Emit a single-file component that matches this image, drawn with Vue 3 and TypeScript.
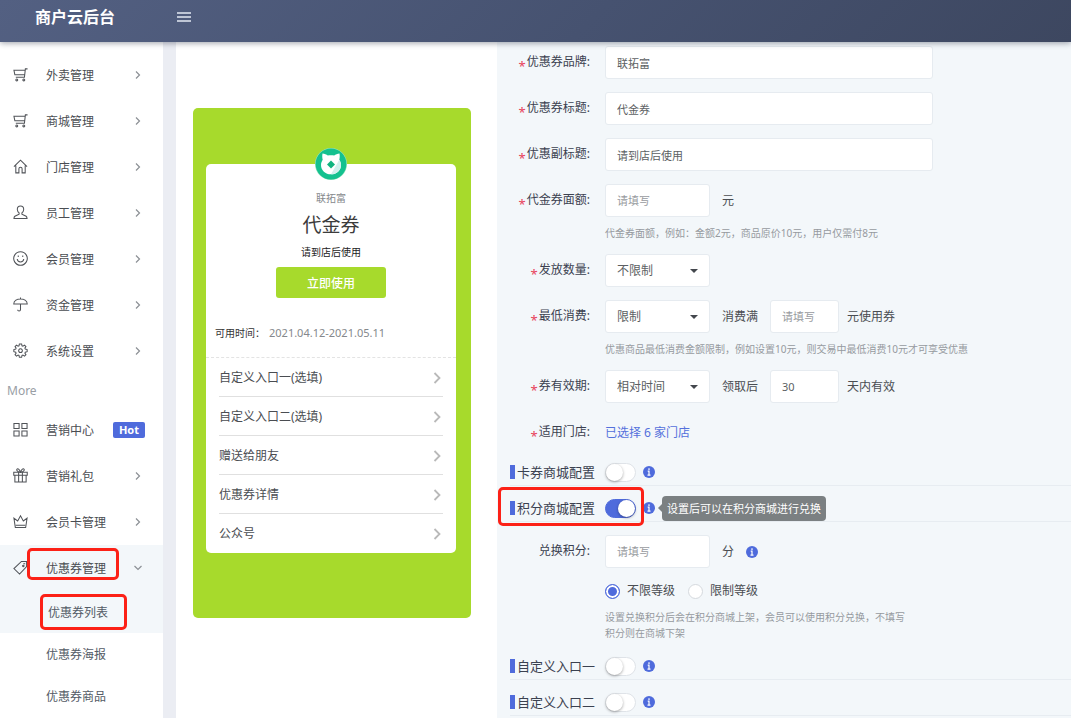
<script setup lang="ts">
import { ref } from 'vue'

interface MenuItem {
  label: string
  icon: string
  badge?: string
  open?: boolean
}

const mainMenu: MenuItem[] = [
  { label: '外卖管理', icon: 'cart' },
  { label: '商城管理', icon: 'cart' },
  { label: '门店管理', icon: 'home' },
  { label: '员工管理', icon: 'user' },
  { label: '会员管理', icon: 'smile' },
  { label: '资金管理', icon: 'umbrella' },
  { label: '系统设置', icon: 'gear' },
]

const moreMenu: MenuItem[] = [
  { label: '营销中心', icon: 'grid', badge: 'Hot' },
  { label: '营销礼包', icon: 'gift' },
  { label: '会员卡管理', icon: 'crown' },
  { label: '优惠券管理', icon: 'tag', open: true },
]

const subMenu = ['优惠券列表', '优惠券海报', '优惠券商品']

const icons: Record<string, string> = {
  cart: 'M15.500 2h-2.300l-1 9H3M13 3.500H1l1 4.800h10.500M4 12.800a1 1 0 1 0 .01 0M11.500 12.800a1 1 0 1 0 .01 0',
  home: 'M1 8.200 8 1.200l7 7M3 6.800v8h3.300v-4.300a1.700 1.700 0 0 1 3.400 0v4.300H13v-8',
  user: 'M8 1C5.800 1 4.500 2.600 4.600 4.700c.1 1.700.9 2.800 1.900 3.600v1.500L2 12c-.6.4-.9 1-1 2.500h14c-.1-1.500-.4-2.100-1-2.500L9.500 9.800V8.300c1-.8 1.800-1.900 1.900-3.600C11.500 2.600 10.200 1 8 1z',
  smile: 'M8 .8a7.200 7.200 0 1 0 .01 0M4.500 8.500c.5 4.200 6.500 4.200 7 0M5.600 4.800v1.700M10.400 4.800v1.700',
  umbrella: 'M.8 7.500C1 .2 15 .2 15.200 7.500zM8 7.500v5.800c0 2-3 2-3 .2M8 2V.6',
  gear: 'M6.800 1h2.400l.4 2 1 .4 1.700-1.100 1.500 1.500-1.100 1.700.4 1 2 .5v2.300l-2 .5-.4 1 1.100 1.700-1.500 1.500-1.700-1.100-1 .4-.4 1.900H6.800l-.4-1.900-1-.4-1.700 1.100-1.500-1.500 1.100-1.700-.4-1-2-.5V7l2-.5.4-1-1.100-1.700 1.500-1.500 1.700 1.100 1-.4zM8 6.200a2 2 0 1 0 .01 0',
  grid: 'M1 1.500h5.500v5.500H1zM9.500 1.500H15v5.500H9.500zM1 9.500h5.500V15H1zM9.500 9.500H15V15H9.500z',
  gift: 'M.8 4.500h14.400v3.200H.8zM2 7.700h12V15H2zM6 4.500V15M10 4.500V15M8 4.500C7 1.500 5.500.5 4.500 1S3.500 3.500 8 4.500zM8 4.500C9 1.500 10.500.5 11.500 1S12.500 3.500 8 4.500z',
  crown: 'M2.500 14.500 1 4.500l4 3L8 2l3 5.500 4-3-1.500 10zM3 12h10',
  tag: 'M9 1.500h5.500V7L7 15 1 9.200zM11 4h2M11 5.500a.8.8 0 1 0 .01 0',
}

const entries = ['自定义入口一(选填)', '自定义入口二(选填)', '赠送给朋友', '优惠券详情', '公众号']

const brand = ref('联拓富')
const title = ref('代金券')
const subtitle = ref('请到店后使用')
const amount = ref('')
const quantity = ref('不限制')
const minimum = ref('限制')
const minimumAmount = ref('')
const validity = ref('相对时间')
const validDays = ref('30')
const cardMall = ref(false)
const pointsMall = ref(true)
const points = ref('')
const level = ref('all')
const entryOne = ref(false)
const entryTwo = ref(false)
</script>

<template>
  <div class="app">
    <header class="topbar">
      <h1 class="brand">商户云后台</h1>
      <button class="burger" type="button" aria-label="菜单">
        <svg width="14" height="10" viewBox="0 0 14 10"><path d="M0 1h14M0 5h14M0 9h14" stroke="#e4e9f2" stroke-width="1.400" /></svg>
      </button>
    </header>

    <div class="body">
      <nav class="sidebar">
        <ul>
          <li v-for="item in mainMenu" :key="item.label">
            <a class="item" href="#">
              <svg class="icon" viewBox="0 0 16 16"><path :d="icons[item.icon]" /></svg>
              <span class="name">{{ item.label }}</span>
              <svg class="chev" viewBox="0 0 14 14"><path d="M5 3.500 8.500 7 5 10.500" /></svg>
            </a>
          </li>
        </ul>
        <p class="more">More</p>
        <ul>
          <li v-for="item in moreMenu" :key="item.label" :class="{ open: item.open }">
            <a class="item" href="#">
              <svg class="icon" viewBox="0 0 16 16"><path :d="icons[item.icon]" /></svg>
              <span class="name">{{ item.label }}</span>
              <span v-if="item.badge" class="badge">{{ item.badge }}</span>
              <svg v-else-if="item.open" class="chev" viewBox="0 0 14 14"><path d="M3.500 5 7 8.500 10.500 5" /></svg>
              <svg v-else class="chev" viewBox="0 0 14 14"><path d="M5 3.500 8.500 7 5 10.500" /></svg>
            </a>
            <span v-if="item.open" class="mark mark-menu"></span>
          </li>
        </ul>
        <ul>
          <li v-for="(name, i) in subMenu" :key="name" :class="{ open: i === 0 }">
            <a class="sub" :class="{ current: i === 0 }" href="#">{{ name }}</a>
            <span v-if="i === 0" class="mark mark-sub"></span>
          </li>
        </ul>
      </nav>

      <main class="main">
        <section class="preview">
          <div class="phone">
            <div class="coupon">
              <svg class="logo" viewBox="0 0 32 32">
                <circle cx="16" cy="16" r="16" fill="#9be3c0" />
                <circle cx="16" cy="16" r="15.400" fill="#14c18f" />
                <path d="M7.500 5.500c2 .1 4 1 5.300 2.100 2-.6 4.400-.6 6.400 0 1.300-1.100 3.300-2 5.300-2.100.4 2.200.3 4.300-.2 6.200 1 1.500 1.700 3.200 1.700 5.200 0 5.400-4.400 9.400-10 9.400s-10-4-10-9.400c0-2 .7-3.700 1.700-5.200-.5-1.900-.6-4-.2-6.200z" fill="#fff" />
                <path d="M24.300 11.700c1 1.500 1.700 3.200 1.700 5.200 0 5.400-4.400 9.400-10 9.400z" fill="#d3f0ee" />
                <path d="M16 12.500 20 16.500 16 20.500 12 16.500z" fill="#10b47f" />
              </svg>
              <p class="c-brand">{{ brand }}</p>
              <h2 class="c-title">{{ title }}</h2>
              <p class="c-sub">{{ subtitle }}</p>
              <button class="c-use" type="button">立即使用</button>
              <p class="c-time"><span>可用时间：</span><span class="date">2021.04.12-2021.05.11</span></p>
              <ul class="c-list">
                <li v-for="entry in entries" :key="entry">
                  <a href="#">
                    <span>{{ entry }}</span>
                    <svg width="12" height="12" viewBox="0 0 12 12"><path d="M3.500 1 8.500 6l-5 5" fill="none" stroke="#b9b9b9" stroke-width="1.800" /></svg>
                  </a>
                </li>
              </ul>
            </div>
          </div>
        </section>

        <form class="form" @submit.prevent>
          <div class="field">
            <label for="brand"><i>*</i>优惠券品牌:</label>
            <input id="brand" v-model="brand" class="box wide" type="text" />
          </div>
          <div class="field">
            <label for="title"><i>*</i>优惠券标题:</label>
            <input id="title" v-model="title" class="box wide" type="text" />
          </div>
          <div class="field">
            <label for="subtitle"><i>*</i>优惠副标题:</label>
            <input id="subtitle" v-model="subtitle" class="box wide" type="text" />
          </div>
          <div class="field">
            <label for="amount"><i>*</i>代金券面额:</label>
            <div>
              <div class="line">
                <input id="amount" v-model="amount" class="box mid" type="text" placeholder="请填写" />
                <span class="unit">元</span>
              </div>
              <p class="hint">代金券面额，例如：金额2元，商品原价10元，用户仅需付8元</p>
            </div>
          </div>
          <div class="field">
            <label for="quantity"><i>*</i>发放数量:</label>
            <div class="line">
              <span class="pick">
                <select id="quantity" v-model="quantity" class="box mid"><option>不限制</option><option>限制</option></select>
                <svg viewBox="0 0 8 4"><path d="M0 0h8L4 4z" /></svg>
              </span>
            </div>
          </div>
          <div class="field">
            <label for="minimum"><i>*</i>最低消费:</label>
            <div>
              <div class="line">
                <span class="pick">
                  <select id="minimum" v-model="minimum" class="box mid"><option>限制</option><option>不限制</option></select>
                  <svg viewBox="0 0 8 4"><path d="M0 0h8L4 4z" /></svg>
                </span>
                <label class="unit" for="minimum-amount">消费满</label>
                <input id="minimum-amount" v-model="minimumAmount" class="box small" type="text" placeholder="请填写" />
                <span class="unit tail">元使用券</span>
              </div>
              <p class="hint">优惠商品最低消费金额限制，例如设置10元，则交易中最低消费10元才可享受优惠</p>
            </div>
          </div>
          <div class="field">
            <label for="validity"><i>*</i>券有效期:</label>
            <div class="line">
              <span class="pick">
                <select id="validity" v-model="validity" class="box mid"><option>相对时间</option><option>固定时间</option></select>
                <svg viewBox="0 0 8 4"><path d="M0 0h8L4 4z" /></svg>
              </span>
              <label class="unit" for="days">领取后</label>
              <input id="days" v-model="validDays" class="box small" type="text" />
              <span class="unit tail">天内有效</span>
            </div>
          </div>
          <div class="field">
            <span class="label"><i>*</i>适用门店:</span>
            <a class="stores" href="#">已选择 6 家门店</a>
          </div>

          <div class="section">
            <label for="card-mall">卡券商城配置</label>
            <input id="card-mall" v-model="cardMall" class="switch" type="checkbox" />
            <svg class="info" viewBox="0 0 12 12"><circle cx="6" cy="6" r="6" /><path d="M6 2.200v1.700M4.700 5.200H6v4M4.500 9.200h3" /></svg>
          </div>
          <div class="section">
            <label for="points-mall">积分商城配置</label>
            <input id="points-mall" v-model="pointsMall" class="switch" type="checkbox" />
            <span class="tip-anchor">
              <svg class="info" viewBox="0 0 12 12"><circle cx="6" cy="6" r="6" /><path d="M6 2.200v1.700M4.700 5.200H6v4M4.500 9.200h3" /></svg>
              <span class="tip" role="tooltip">设置后可以在积分商城进行兑换</span>
            </span>
            <span class="mark mark-section"></span>
          </div>

          <div class="field after">
            <label for="points">兑换积分:</label>
            <div>
              <div class="line">
                <input id="points" v-model="points" class="box mid" type="text" placeholder="请填写" />
                <span class="unit">分</span>
                <svg class="info" viewBox="0 0 12 12"><circle cx="6" cy="6" r="6" /><path d="M6 2.200v1.700M4.700 5.200H6v4M4.500 9.200h3" /></svg>
              </div>
              <div class="radios">
                <label><input v-model="level" type="radio" name="level" value="all" />不限等级</label>
                <label><input v-model="level" type="radio" name="level" value="limited" />限制等级</label>
              </div>
              <p class="hint narrow">设置兑换积分后会在积分商城上架，会员可以使用积分兑换，不填写积分则在商城下架</p>
            </div>
          </div>

          <div class="section">
            <label for="entry-one">自定义入口一</label>
            <input id="entry-one" v-model="entryOne" class="switch" type="checkbox" />
            <svg class="info" viewBox="0 0 12 12"><circle cx="6" cy="6" r="6" /><path d="M6 2.200v1.700M4.700 5.200H6v4M4.500 9.200h3" /></svg>
          </div>
          <div class="section">
            <label for="entry-two">自定义入口二</label>
            <input id="entry-two" v-model="entryTwo" class="switch" type="checkbox" />
            <svg class="info" viewBox="0 0 12 12"><circle cx="6" cy="6" r="6" /><path d="M6 2.200v1.700M4.700 5.200H6v4M4.500 9.200h3" /></svg>
          </div>
        </form>
      </main>
    </div>
  </div>
</template>

<style>
body {
  margin: 0;
  background: #fff;
}
</style>

<style scoped>
.app,
.app * {
  box-sizing: border-box;
}
.app {
  display: flex;
  flex-direction: column;
  min-height: 100vh;
  font-family: "Noto Sans", "Noto Sans CJK SC", sans-serif;
  font-size: 12px;
  line-height: 16px;
  color: #4a4d52;
}
.app input,
.app select,
.app button {
  font-family: inherit;
}
ul,
p,
h1,
h2 {
  margin: 0;
  padding: 0;
  list-style: none;
}
a {
  color: inherit;
  text-decoration: none;
}

.topbar {
  position: relative;
  z-index: 3;
  display: flex;
  align-items: center;
  gap: 62px;
  height: 42px;
  padding: 0 35px 9px;
  background: linear-gradient(135deg, #536082 0%, #465270 55%, #3d4760 100%);
  box-shadow: 0 1px 6px rgba(30, 40, 60, 0.45);
}
.brand {
  font-size: 16px;
  line-height: 24px;
  font-weight: 700;
  color: #fff;
}
.burger {
  display: flex;
  padding: 0;
  border: 0;
  background: none;
}

.body {
  display: flex;
  flex: 1;
  background: #ebedf3;
}
.sidebar {
  flex: 0 0 163px;
  padding-top: 10px;
  background: #fff;
}
.sidebar li {
  position: relative;
}
.open {
  background: #f3f7fa;
}
.item {
  display: flex;
  align-items: center;
  gap: 18px;
  height: 46px;
  padding: 0 18px 1px 13px;
}
.icon {
  flex: none;
  width: 15px;
  height: 15px;
  fill: none;
  stroke: #505358;
  stroke-width: 1.1;
}
.name {
  flex: 1;
  padding-top: 3px;
  white-space: nowrap;
}
.chev {
  width: 14px;
  height: 14px;
  fill: none;
  stroke: #8c9095;
  stroke-width: 1.2;
}
.badge {
  padding: 0 6px;
  border-radius: 2px;
  background: #4f6bdc;
  color: #fff;
  font-size: 11px;
  font-weight: 700;
}
.more {
  padding-left: 7px;
  line-height: 33px;
  color: #999ea5;
}
.sub {
  display: block;
  padding: 1px 0 0 46px;
  line-height: 41px;
  color: #545b66;
}
.sub.current {
  padding-left: 48px;
}

.mark {
  position: absolute;
  z-index: 2;
  border: 3px solid #fc2117;
  border-radius: 5px;
  pointer-events: none;
}
.mark-menu {
  left: 27px;
  top: 3px;
  width: 92px;
  height: 32px;
}
.mark-sub {
  left: 40px;
  top: 3px;
  width: 87px;
  height: 36px;
}
.mark-section {
  left: -12px;
  top: 1px;
  width: 146px;
  height: 39px;
}

.main {
  display: flex;
  flex: 1;
  margin-left: 13px;
}
.preview {
  flex: 0 0 321px;
  padding: 66px 26px 0 17px;
  background: #fff;
}
.phone {
  padding: 56px 15px 65px 13px;
  border-radius: 5px;
  background: #a7da2c;
}
.coupon {
  position: relative;
  display: flex;
  flex-direction: column;
  align-items: center;
  padding-top: 26px;
  border-radius: 5px;
  background: #fff;
}
.logo {
  position: absolute;
  top: -16px;
  width: 32px;
  height: 32px;
}
.c-brand {
  font-size: 10px;
  color: #85888c;
}
.c-title {
  font-size: 19px;
  line-height: 38px;
  font-weight: 400;
  color: #3c3c3c;
}
.c-sub {
  font-size: 10px;
  color: #222;
}
.c-use {
  width: 110px;
  height: 31px;
  margin-top: 7px;
  border: 0;
  border-radius: 3px;
  background: #a7da2c;
  color: #fff;
  font-size: 12px;
  font-weight: 500;
}
.c-time {
  display: flex;
  align-self: stretch;
  gap: 4px;
  margin-top: 11px;
  padding-left: 9px;
  font-size: 10px;
  line-height: 48px;
  color: #333;
}
.date {
  font-size: 11px;
  color: #85888c;
}
.c-list {
  align-self: stretch;
  padding: 0 13px 1px;
  border-top: 1px dashed #e3e3e3;
}
.c-list li + li {
  border-top: 1px solid #e0e0e0;
}
.c-list a {
  display: flex;
  align-items: center;
  justify-content: space-between;
  height: 38px;
  padding-top: 2px;
}

.form {
  flex: 1;
  padding: 4px 0 0 13px;
  background: #f3f7fa;
}
.field {
  display: grid;
  grid-template-columns: 80px 1fr;
  column-gap: 15px;
}
.field + .field,
.after {
  margin-top: 13px;
}
.after {
  margin-bottom: 3px;
}
.field > label,
.label {
  display: flex;
  justify-content: flex-end;
  font-size: 12px;
  line-height: 32px;
  white-space: nowrap;
  color: #3b4150;
}
.field i {
  padding: 4px 1px 0 0;
  font-size: 13px;
  line-height: 32px;
  height: 32px;
  font-style: normal;
  color: #e8415a;
}
.line {
  display: flex;
  align-items: center;
}
.box {
  height: 33px;
  padding: 0 11px;
  border: 1px solid #e6ebf0;
  border-radius: 3px;
  background: #fff;
  color: #5c5f63;
  font-size: 11px;
  outline: none;
}
.box::placeholder {
  color: #989ba0;
  opacity: 1;
}
.wide {
  width: 100%;
  max-width: 328px;
}
.mid {
  width: 105px;
}
.small {
  width: 69px;
}
.pick {
  position: relative;
  display: flex;
}
.pick select {
  appearance: none;
  font-size: 12px;
}
.pick svg {
  position: absolute;
  right: 12px;
  top: 15px;
  width: 8px;
  height: 4px;
  fill: #43474d;
  pointer-events: none;
}
.unit {
  margin: 0 12px;
}
.unit.tail {
  margin-left: 8px;
}
.hint {
  margin-top: 8px;
  font-size: 10px;
  color: #969a9f;
}
.narrow {
  max-width: 305px;
}
.stores {
  line-height: 34px;
  color: #5470dc;
}
.label {
  height: 33px;
}

.section {
  position: relative;
  display: flex;
  align-items: center;
  height: 36px;
  padding-top: 9px;
  border-bottom: 1px solid #e7ecf1;
}
.section > label {
  width: 95px;
  line-height: 14px;
  font-size: 13px;
  color: #3b4150;
  display: flex;
  gap: 2px;
}
.section > label::before {
  content: "";
  width: 5px;
  height: 14px;
  background: #4f6bdc;
}
.switch {
  appearance: none;
  width: 31px;
  height: 19px;
  margin: 0 7px 0 0;
  border: 1px solid #dfe3e8;
  border-radius: 10px;
  background: #fff;
}
.switch::before {
  content: "";
  display: block;
  width: 17px;
  height: 17px;
  border-radius: 50%;
  background: #fff;
  box-shadow: 0 1px 3px rgba(0, 0, 0, 0.35);
}
.switch:checked {
  border-color: #4f6bdc;
  background: #4f6bdc;
}
.switch:checked::before {
  margin-left: 12px;
}
.info {
  display: block;
  width: 12px;
  height: 12px;
}
.info circle {
  fill: #4f6bdc;
}
.info path {
  fill: none;
  stroke: #fff;
  stroke-width: 1.2;
}
.tip-anchor {
  position: relative;
}
.tip {
  position: absolute;
  left: 19px;
  top: -6px;
  padding: 0 5px;
  border-radius: 4px;
  background: #7b8082;
  color: #fff;
  font-size: 11px;
  line-height: 25px;
  white-space: nowrap;
}
.tip::before {
  content: "";
  position: absolute;
  left: -4px;
  top: 8px;
  border: solid transparent;
  border-width: 4px 4px 4px 0;
  border-right-color: #7b8082;
}
.radios {
  display: flex;
  gap: 13px;
  height: 20px;
  margin-top: 13px;
}
.radios label {
  display: flex;
  align-items: center;
  gap: 7px;
}
.radios input {
  appearance: none;
  width: 15px;
  height: 15px;
  margin: 0;
  border: 1px solid #d5d9de;
  border-radius: 50%;
  background: #fff;
}
.radios input:checked {
  border-color: #4f6bdc;
  background: #4f6bdc;
  box-shadow: inset 0 0 0 2px #fff;
}
</style>
